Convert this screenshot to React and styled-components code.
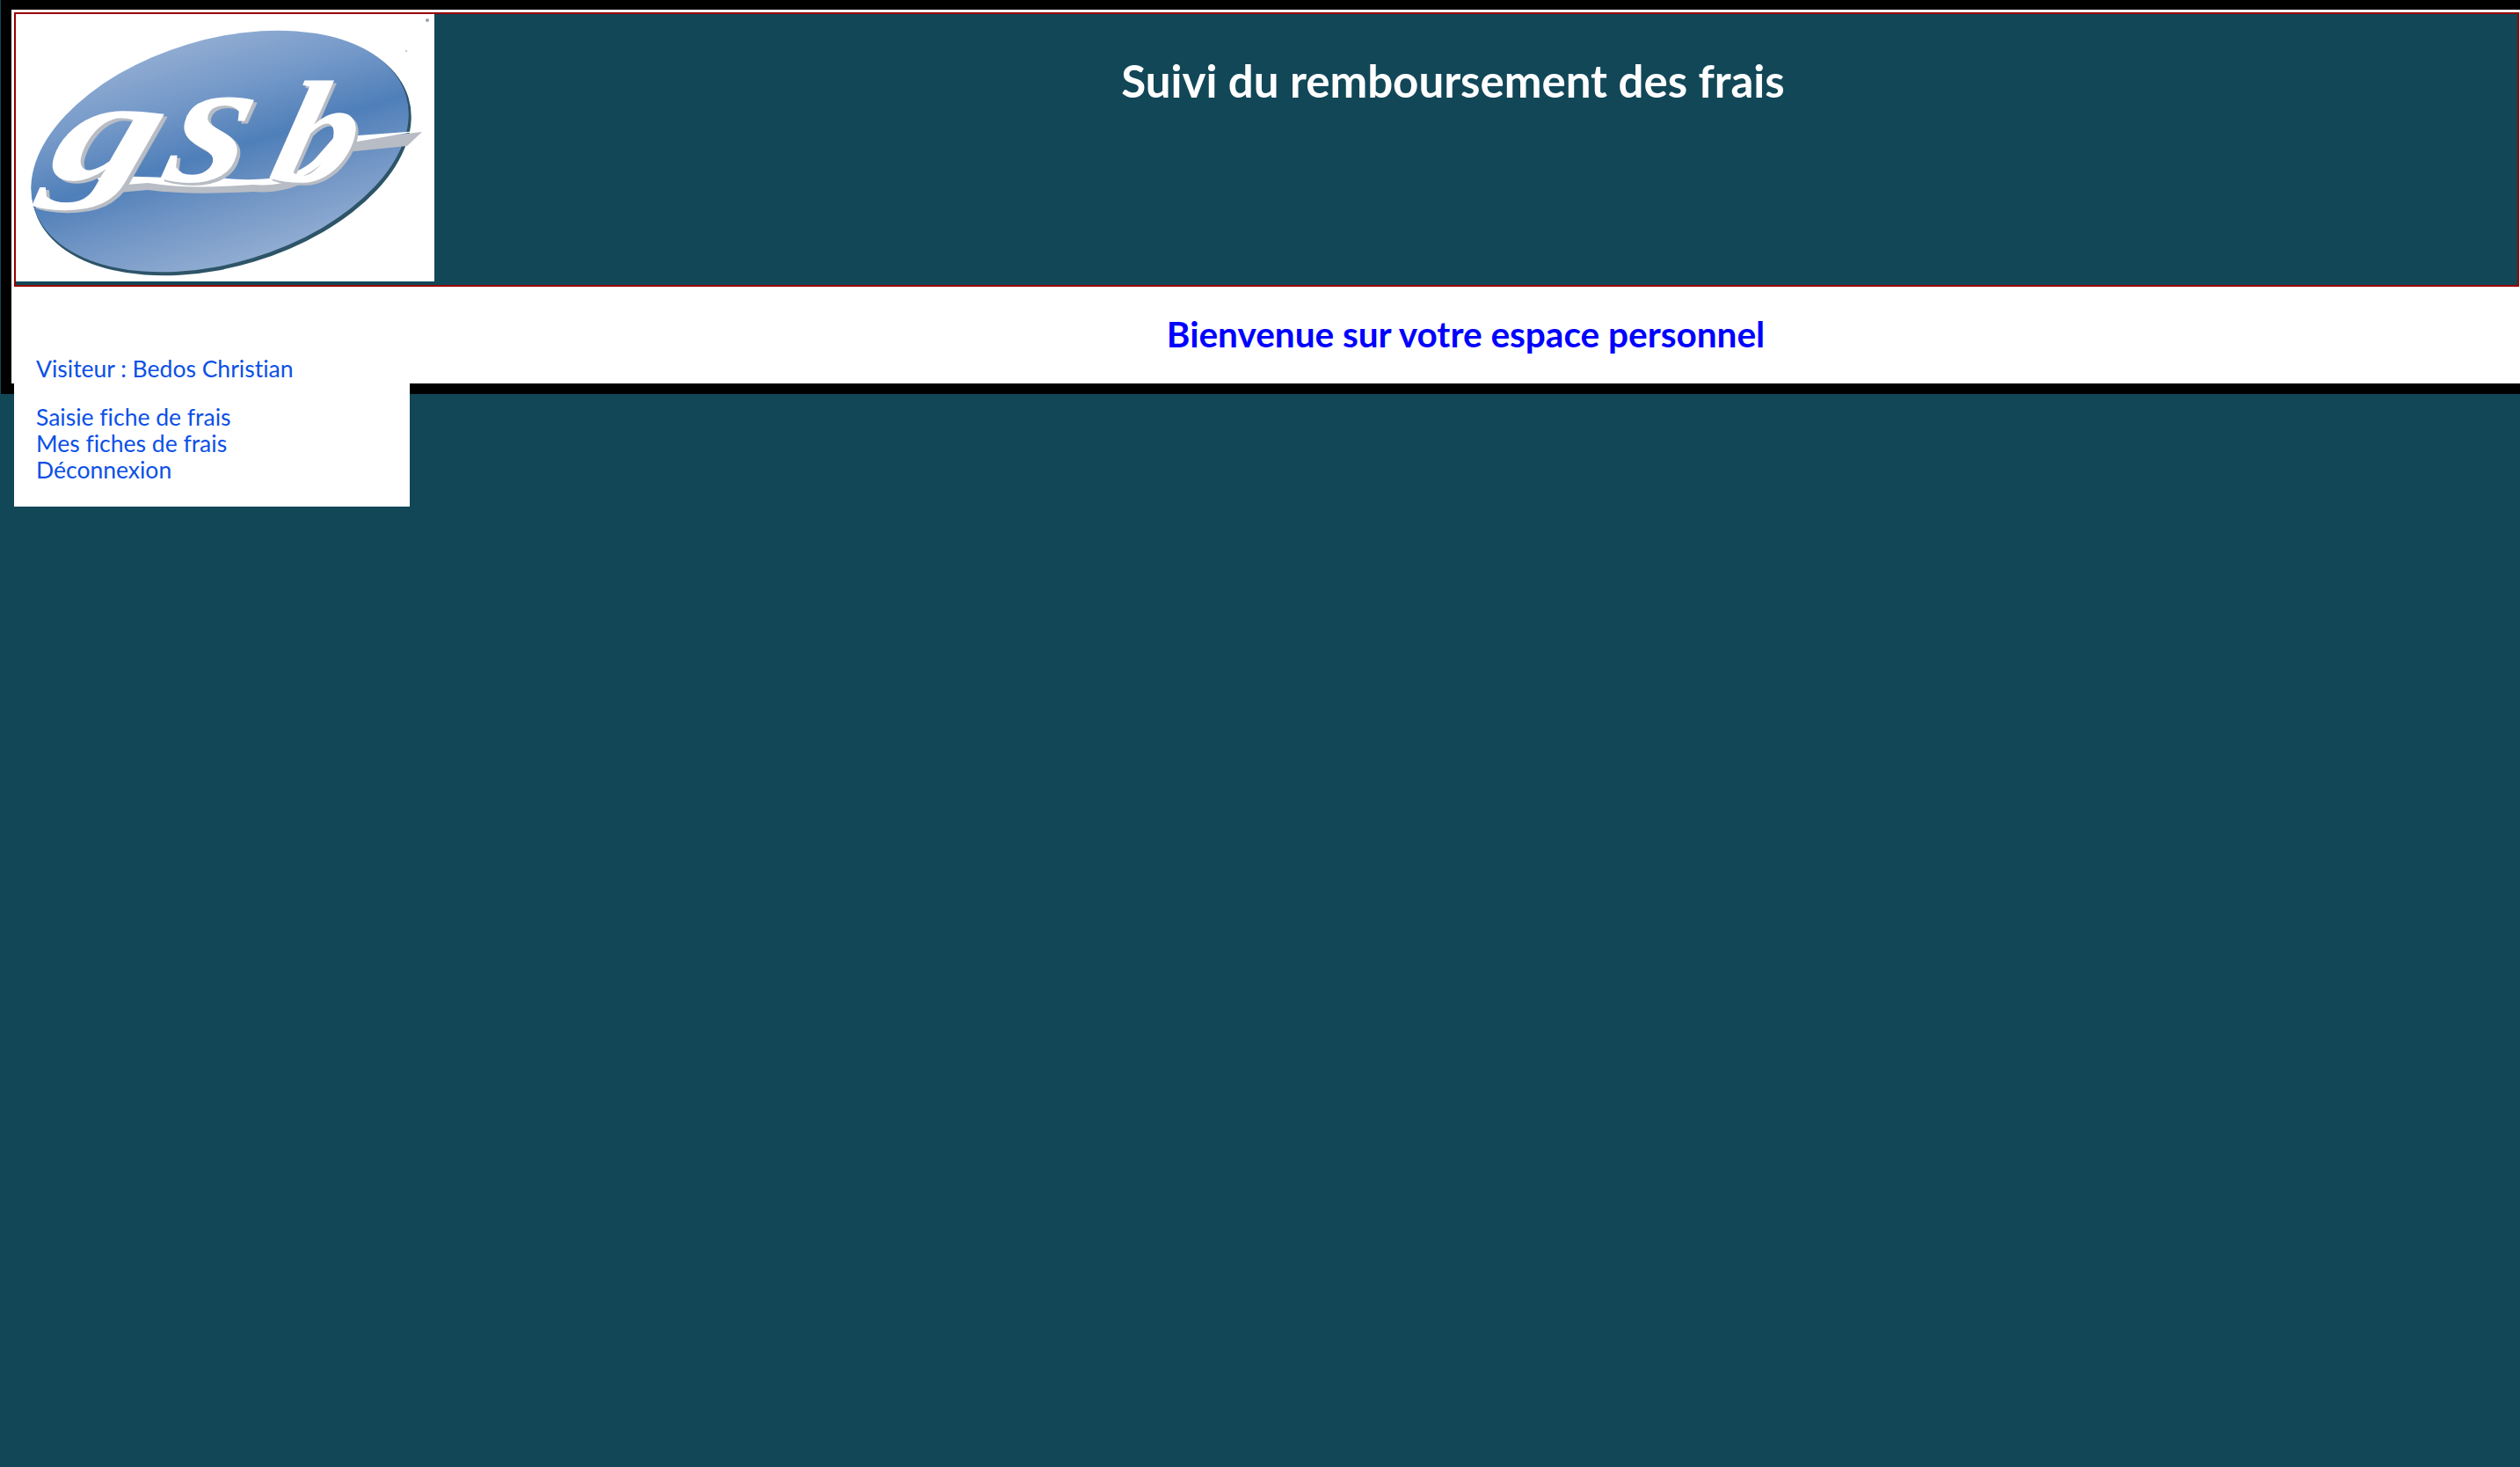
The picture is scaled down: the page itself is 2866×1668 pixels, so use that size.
import React from 'react'
import styled, { createGlobalStyle } from 'styled-components'

const GlobalStyle = createGlobalStyle`
  html, body {
    margin: 0;
    padding: 0;
    background: #124758;
    overflow: hidden;
  }
  body {
    height: 1668px;
    font-family: Lato, "DejaVu Sans Condensed", sans-serif;
    font-variant-ligatures: none;
  }
`

const Page = styled.div`
  padding-left: 1px;
`

const Frame = styled.div`
  box-sizing: border-box;
  height: 448px;
  background: #fff;
  border-style: solid;
  border-color: #000;
  border-width: 11px 0 12px 12px;
  padding: 3px 1px 0 3px;
`

const Header = styled.header`
  display: flex;
  align-items: flex-start;
  height: 308px;
  background: #124758;
  border: 2px solid #990000;
`

const Title = styled.h1`
  flex: 1;
  margin: 48px 0 0;
  padding-right: 52px;
  text-align: center;
  font-size: 51px;
  line-height: 56px;
  font-weight: 700;
  color: #fff;
`

const Welcome = styled.h2`
  margin: 0;
  padding: 31px 0 0 453px;
  text-align: center;
  font-size: 40.5px;
  line-height: 46px;
  font-weight: 700;
  color: #0000ff;
`

const Sidebar = styled.nav`
  position: relative;
  box-sizing: border-box;
  width: 450px;
  margin: -108px 0 0 15px;
  padding: 64px 0 27px 25px;
  background: #fff;
  font-size: 26.5px;
  line-height: 30px;
  color: #0b50e6;
`

const Visitor = styled.div`
  margin-bottom: 25px;
`

const MenuList = styled.ul`
  margin: 0;
  padding: 0;
  list-style: none;
`

const MenuLink = styled.a`
  color: inherit;
  text-decoration: none;
`

const LogoBox = styled.svg`
  display: block;
  flex: none;
  width: 476px;
  height: 304px;
  background: #fff;
`

const Letter = ({ x, y, sx, sy, children }) => (
  <g transform={`translate(${x} ${y}) scale(${sx} ${sy}) skewX(-12)`}>
    <text x="3" y="2.5" fill="#b8bcc4" fontFamily="'Liberation Serif', serif" fontStyle="italic" fontWeight="700" fontSize="150">{children}</text>
    <text x="0" y="0" fill="#fff" fontFamily="'Liberation Serif', serif" fontStyle="italic" fontWeight="700" fontSize="150">{children}</text>
  </g>
)

const Logo = () => (
  <LogoBox viewBox="0 0 476 304">
    <defs>
      <linearGradient id="oval" x1="0" y1="0" x2="0" y2="1">
        <stop offset="0" stopColor="#8fabd2" />
        <stop offset="0.25" stopColor="#7398c8" />
        <stop offset="0.5" stopColor="#4f7fb9" />
        <stop offset="0.72" stopColor="#6f94c4" />
        <stop offset="1" stopColor="#90acd2" />
      </linearGradient>
    </defs>
    <ellipse cx="234" cy="159" rx="222" ry="128" transform="rotate(-16.8 234 159)" fill="#2d5468" />
    <ellipse cx="232" cy="156" rx="221" ry="127" transform="rotate(-16.8 232 156)" fill="url(#oval)" />
    <path d="M96 193 C150 188 190 196 220 190 C270 196 320 196 345 170 L372 144 L462 134 L445 150 L365 158 C345 190 310 205 270 202 C225 204 190 205 150 200 L105 204 Z" fill="#b8bcc4" />
    <path d="M92 186 C150 182 185 190 218 184 C265 192 315 190 340 165 L362 140 L458 133 L365 149 C345 182 310 197 270 194 C225 197 190 198 150 192 L100 196 Z" fill="#fff" />
    <Letter x="32" y="188" sx="1.6" sy="1.1">g</Letter>
    <Letter x="165" y="190" sx="1.55" sy="1.35">s</Letter>
    <Letter x="285" y="190" sx="1.25" sy="1.1">b</Letter>
    <circle cx="468" cy="7" r="2" fill="#9aa3ad" />
    <circle cx="444" cy="42" r="1.2" fill="#c4cbd4" />
  </LogoBox>
)

const App = () => (
  <>
    <GlobalStyle />
    <Page>
      <Frame>
        <Header>
          <Logo />
          <Title>Suivi du remboursement des frais</Title>
        </Header>
        <Welcome>Bienvenue sur votre espace personnel</Welcome>
      </Frame>
      <Sidebar>
        <Visitor>Visiteur : Bedos Christian</Visitor>
        <MenuList>
          <li><MenuLink href="#saisie">Saisie fiche de frais</MenuLink></li>
          <li><MenuLink href="#fiches">Mes fiches de frais</MenuLink></li>
          <li><MenuLink href="#deconnexion">Déconnexion</MenuLink></li>
        </MenuList>
      </Sidebar>
    </Page>
  </>
)

export default App
